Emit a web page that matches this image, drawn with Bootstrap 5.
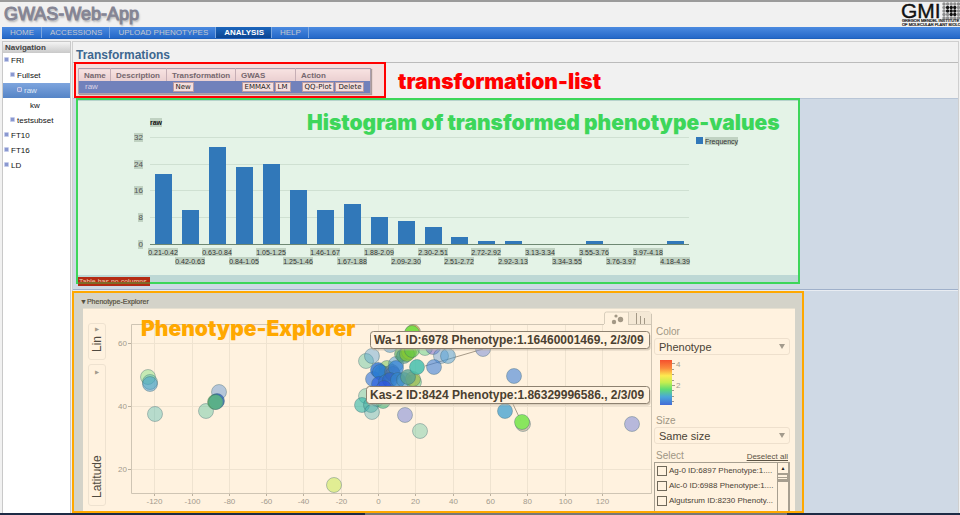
<!DOCTYPE html>
<html lang="en">
<head>
<meta charset="utf-8">
<meta name="viewport" content="width=device-width, initial-scale=1">
<title>GWAS-Web-App</title>
<link rel="stylesheet" href="https://cdn.jsdelivr.net/npm/bootstrap@5.3.0/dist/css/bootstrap.min.css">
<style>
body{font-family:"Liberation Sans",Arial,sans-serif;font-size:8px;line-height:10px;background:#f1f1f1;color:#333}
svg{display:block}
svg text{font-family:"Liberation Sans",Arial,sans-serif}
.top-strip{height:2px;background:#9b9b9b}
.brand{font-size:18px;line-height:25px;color:#858594;text-shadow:1px 2px 2px #aaa;-webkit-text-stroke:1px #858594}
.main-nav{background:linear-gradient(#4b8ae0,#2468c8);margin-left:2px;height:12px;border-bottom:1px solid #1f61bb}
.main-nav a{color:#c3c8d0;padding:0 7px 0 8px;line-height:12px;border-right:1px solid #7ba6df;font-size:8px;text-decoration:none}
.main-nav a.active{background:linear-gradient(#1c66bd,#0b4592);color:#fff;font-weight:bold}
.side{width:69px;margin:2px 0 0 2px;background:#fff;border:1px solid #c9c9c9;border-bottom:0}
.side h2{font-size:8px;line-height:11px;font-weight:bold;background:linear-gradient(#f4f4f4,#c9c9c9);padding-left:2px;color:#444}
.side a{display:block;line-height:15px;color:#111;text-decoration:none;font-size:8px}
.side a::before{content:"";display:inline-block;width:3px;height:3px;background:#8a98d0;border:1px solid #c3cbea;box-sizing:content-box;border-radius:1px;vertical-align:1px;margin-right:2px}
.side a.leaf::before{visibility:hidden}
.side a.active{background:linear-gradient(#7ea5de,#5584c6);color:#dfe8f6}
.side .lv0{padding-left:1px}.side .lv1{padding-left:7px}.side .lv2{padding-left:14px}.side .lv3{padding-left:20px}
.content{border:1px solid #cfcfcf;border-bottom:0;margin:2px 1px 0 1px}
.content h1{font-size:12px;line-height:14px;font-weight:bold;color:#3d678f;padding:6px 0 0 3px}
.list-row{border-top:1px solid #bbb}
.callout-red{width:312px;border:2px solid #f00;background:#f5dedd;margin:-1px 0 0 1px;padding:4px 2px 2px 2px}
.note{font-family:Inter,sans-serif;font-weight:900;line-height:24px}
.note-red{color:#f00;font-size:21px;margin-left:12px;padding-top:3px}
.tlist{border:1px solid #ab9fae;box-shadow:1px 1px 1px #a99;width:293px}
.tlist th{font-size:8px;line-height:11px;font-weight:bold;color:#75676e;background:linear-gradient(#f7e2e1,#eacfd0);padding:1px 0 0 5px;border-left:1px solid #c6aeb5}
.tlist td{background:#7181bb;color:#dcd3e5;line-height:12px;height:12px;padding:0 0 0 6px}
.tlist button{font-family:"DejaVu Sans",sans-serif;font-size:7px;line-height:8px;padding:0 2px;border:1px solid #b99ba1;background:#f5dedd;color:#222;height:10px;margin:1px 1px 1px 0;vertical-align:top}
.band{background:#cfd9e5;border-top:1px solid #b8c5d6;border-bottom:1px solid #9fb0ca}
.hist{border:2px solid #3dd65a;background:#e4f3e7;margin-left:3px;margin-right:158px;margin-bottom:5px;margin-top:-1px}
.hist-foot{height:7px;background:#bdd8d5}
.err{left:0;bottom:-4px;background:#b42a12;color:#e6cdb0;font-size:7px;line-height:10px;padding:0 1px;height:9px;overflow:hidden}
.err::after{content:"";position:absolute;left:0;right:0;bottom:2px;height:2px;background:#806a28}
.explorer-row{background:#cfd9e5;border-top:1px solid #e8ecf2;min-height:0}
.explorer{border:2px solid #ffa800;background:#d4d3c9;margin-left:-1px;margin-right:154px;padding:2px 7px 0 9px;min-height:0}
.explorer h2{font-size:7px;line-height:13px;margin:0 0 0 -3px;color:#55503f;-webkit-text-stroke:.2px #55503f}
.pane{background:#fff2df;border-top:1px solid #e6e0d0;overflow:hidden;min-height:0}
.axis{width:20px;margin-left:5px;padding-top:14px}
.axis button{writing-mode:vertical-rl;transform:rotate(180deg);width:18px;background:none;border:1px solid #eee2d0;border-radius:3px;font-size:12px;line-height:14px;color:#4f4a40;padding:7px 1px 4px}
.axis small{font-size:7px;color:#a39b8d;text-orientation:sideways}
.ctl{width:136px;margin-right:5px;padding-top:17px}
.ctl label,.ctl .cap{font-size:10px;line-height:12px;color:#a09684;padding-left:2px;display:block}
.pick{height:17px}
.pick select{appearance:none;width:100%;height:17px;border:1px solid #eee0cd;border-radius:3px;background:none;font-size:11px;line-height:14px;padding:0 4px;color:#4a4336}
.pick::after{content:"";position:absolute;right:5px;top:6px;border:3px solid transparent;border-top:5px solid #a39b8d;border-bottom:0}
.pick-head{padding:6px 2px 0 0}
.ctl a{font-size:8px;color:#5b5344}
.acc{border:1px solid #a79f90;border-bottom:0;height:60px;overflow:hidden}
.acc .line label{font-size:8px;line-height:15px;color:#4a4336;padding:0 0 0 2px;white-space:nowrap}
.acc .line{height:15px;padding-left:2px}
.acc input{appearance:none;width:10px;height:10px;border:1px solid #6f685a;margin:0}
.bar-v{width:12px;border:1px solid #a79f90;border-width:0 1px}
.bar-v button{border:0;border-bottom:1px solid #a79f90;background:none;font-size:5px;line-height:10px;height:11px;padding:0;width:100%;color:#222}
.bar-v i{display:block;height:8px;border:1px solid #a79f90;border-width:1px 1px 2px 0;background:linear-gradient(transparent 2px,#a79f90 2px 3px,transparent 3px 4px,#a79f90 4px 5px,transparent 5px)}
.bottom-strip{height:2px;background:linear-gradient(90deg,#1d2b45 38%,#777 38% 82%,#1d2b45 82%)}
</style>
<script src="https://cdn.jsdelivr.net/npm/bootstrap@5.3.0/dist/js/bootstrap.bundle.min.js"></script>
</head>
<body class="vh-100 d-flex flex-column overflow-hidden">
<div class="top-strip flex-shrink-0"></div>
<header class="d-flex justify-content-between flex-shrink-0">
  <div class="brand ps-1">GWAS-Web-App</div>
  <svg class="overflow-visible" width="59" height="25" viewBox="901 2 59 25" role="img" aria-label="GMI">
    <text x="901" y="18" font-size="21" fill="#111" stroke="#111" stroke-width=".4">GMI</text>
    <g id="logoDots"></g>
    <text x="902" y="22" font-size="4" fill="#111" stroke="#111" stroke-width=".2">GREGOR MENDEL INSTITUTE</text>
    <text x="902" y="26" font-size="4" fill="#111" stroke="#111" stroke-width=".2">OF MOLECULAR PLANT BIOLOGY</text>
  </svg>
</header>
<nav class="main-nav d-flex flex-shrink-0">
  <a href="#">HOME</a><a href="#">ACCESSIONS</a><a href="#">UPLOAD PHENOTYPES</a><a href="#" class="active">ANALYSIS</a><a href="#">HELP</a>
</nav>
<div class="d-flex flex-grow-1 overflow-hidden">
  <aside class="side flex-shrink-0">
    <h2 class="m-0">Navigation</h2>
    <a href="#" class="lv0">FRI</a>
    <a href="#" class="lv1">Fullset</a>
    <a href="#" class="lv2 active">raw</a>
    <a href="#" class="lv3 leaf">kw</a>
    <a href="#" class="lv1">testsubset</a>
    <a href="#" class="lv0">FT10</a>
    <a href="#" class="lv0">FT16</a>
    <a href="#" class="lv0">LD</a>
  </aside>
  <main class="content flex-grow-1 d-flex flex-column">
    <h1 class="m-0">Transformations</h1>
    <section class="list-row d-flex align-items-center">
      <div class="callout-red">
        <table class="tlist">
          <colgroup><col style="width:32px"><col style="width:56px"><col style="width:69px"><col style="width:60px"><col></colgroup>
          <thead><tr><th>Name</th><th>Description</th><th>Transformation</th><th>GWAS</th><th>Action</th></tr></thead>
          <tbody><tr><td>raw</td><td></td><td><button type="button">New</button></td><td><button type="button">EMMAX</button><button type="button">LM</button></td><td><button type="button">QQ-Plot</button><button type="button">Delete</button></td></tr></tbody>
        </table>
      </div>
      <div class="note note-red">transformation-list</div>
    </section>
    <section class="band">
      <div class="hist position-relative">
        <svg width="100%" viewBox="78 100 720 175" role="img" aria-label="Histogram of transformed phenotype values">
          <path d="M78 100.500H798" stroke="#b5d3cb"/>
          <g id="histGrid"></g><g id="histBars"></g>
          <path d="M150 244.500H689" stroke="#6e8873"/>
          <g id="histLabels"></g>
          <rect x="150" y="118" width="12" height="9" fill="#c0d2c2"/>
          <text x="150" y="125" font-size="7" font-weight="bold" fill="#111">raw</text>
          <rect x="696" y="137" width="7" height="7" fill="#3178b9"/>
          <rect x="705" y="137" width="33" height="8" fill="#c0d2c2"/>
          <text x="705" y="144" font-size="7" fill="#333">Frequency</text>
          <text class="note" x="307" y="130" font-size="21" fill="#3dd65a" style="font-family:Inter">Histogram of transformed phenotype-values</text>
        </svg>
        <div class="hist-foot"></div>
        <div class="err position-absolute">Table has no columns.</div>
      </div>
    </section>
    <section class="explorer-row flex-grow-1 d-flex flex-column">
      <div class="explorer flex-grow-1 d-flex flex-column">
        <h2>▼Phenotype-Explorer</h2>
        <div class="pane d-flex flex-grow-1">
          <div class="axis flex-shrink-0 d-flex flex-column">
            <button type="button" style="height:37px" class="mb-1 d-flex align-items-center flex-shrink-0">Lin&nbsp;<small>▼</small></button>
            <button type="button" style="height:142px" class="d-flex align-items-center justify-content-between flex-shrink-0">Latitude<small>▼</small></button>
          </div>
          <div class="flex-grow-1">
            <svg width="100%" viewBox="108 309 546 203" role="img" aria-label="Latitude and longitude scatter plot">
              <path d="M604.500 324V314q0-2 2-2H649q2 0 2 2V324M628.500 324V312" fill="none" stroke="#d8cebc"/>
              <rect x="629" y="312" width="22" height="12" fill="#f4e8d5"/>
              <g fill="#a39886"><circle cx="614" cy="322" r="2.200"/><circle cx="616" cy="316" r="1.600"/><circle cx="620.500" cy="319.500" r="2.700"/></g>
              <path d="M636.500 313V324M640.500 316V324M644.500 318V324" stroke="#a39886"/>
              <g id="plotGrid"></g>
              <path d="M604 324.500H131.500V493.500H651.500V314M628 324.500H651" fill="none" stroke="#cfc5b4"/>
              <path d="M425 366L483 349M512 402L521 421" stroke="#a79b89"/>
              <g id="dots"></g>
              <g font-size="12" font-weight="bold" fill="#4a4030">
                <rect x="371.500" y="333.500" width="279" height="17" rx="3" fill="#b9ad9b" opacity=".5"/>
                <rect x="370.500" y="331.500" width="279" height="17" rx="3" fill="#fff2df" stroke="#8d8170"/>
                <text x="374" y="344">Wa-1 ID:6978 Phenotype:1.16460001469., 2/3/09</text>
                <rect x="367.500" y="388.500" width="283" height="17" rx="3" fill="#b9ad9b" opacity=".5"/>
                <rect x="366.500" y="386.500" width="283" height="17" rx="3" fill="#fff2df" stroke="#8d8170"/>
                <text x="370" y="399">Kas-2 ID:8424 Phenotype:1.86329996586., 2/3/09</text>
              </g>
              <text class="note" x="141" y="336" font-size="21" fill="#ffa800" style="font-family:Inter">Phenotype-Explorer</text>
            </svg>
          </div>
          <div class="ctl flex-shrink-0">
            <label for="colorSel">Color</label>
            <div class="pick position-relative"><select id="colorSel"><option>Phenotype</option></select></div>
            <svg width="134" height="60" viewBox="655 355 134 60" aria-hidden="true">
              <defs><linearGradient id="heat" x2="0" y2="1"><stop offset="0" stop-color="#f5502e"/><stop offset=".18" stop-color="#fb8a3c"/><stop offset=".35" stop-color="#fdea50"/><stop offset=".5" stop-color="#c4ee50"/><stop offset=".65" stop-color="#5fdd72"/><stop offset=".82" stop-color="#4aa6da"/><stop offset="1" stop-color="#446bd6"/></linearGradient></defs>
              <rect x="661" y="360" width="12" height="45" fill="url(#heat)"/>
              <path d="M673 363.500h3M673 369.500h2M673 374.500h2M673 380.500h2M673 385.500h3M673 390.500h2M673 396.500h2M673 401.500h2" stroke="#a39b8d"/>
              <text x="677" y="367" font-size="8" fill="#a39b8d">4</text><text x="677" y="388" font-size="8" fill="#a39b8d">2</text>
            </svg>
            <label for="sizeSel">Size</label>
            <div class="pick position-relative"><select id="sizeSel"><option>Same size</option></select></div>
            <div class="pick-head d-flex justify-content-between align-items-end"><span class="cap">Select</span><a href="#">Deselect all</a></div>
            <div class="acc d-flex justify-content-between">
              <div class="overflow-hidden">
                <div class="line d-flex align-items-center"><input type="checkbox" id="a1"><label for="a1">Ag-0 ID:6897 Phenotype:1....</label></div>
                <div class="line d-flex align-items-center"><input type="checkbox" id="a2"><label for="a2">Alc-0 ID:6988 Phenotype:1....</label></div>
                <div class="line d-flex align-items-center"><input type="checkbox" id="a3"><label for="a3">Algutsrum ID:8230 Phenoty...</label></div>
                <div class="line d-flex align-items-center"><input type="checkbox" id="a4" aria-label="Next accession"></div>
              </div>
              <div class="bar-v flex-shrink-0"><button type="button" aria-label="Scroll up">▲</button><i></i></div>
            </div>
          </div>
        </div>
      </div>
    </section>
  </main>
</div>
<div class="bottom-strip flex-shrink-0"></div>
<script>
const put = (id, s) => document.getElementById(id).innerHTML = s;
let s = '';
for (let r = 0; r < 5; r++) for (let c = 0; c < 5; c++) {
  const dark = (r > 0 && r < 4 && c > 0 && c < 4 && !(r === 3 && c === 1));
  s += `<circle cx="${944 + c * 3.600}" cy="${4 + r * 3.500}" r="1.700" fill="${dark ? '#111' : '#8e8e8e'}"/>`;
}
put('logoDots', s);

// Histogram
const freq = [21,10,29,23,24,16,10,12,8,7,5,2,1,1,0,0,1,0,0,1];
const bins = ['0.21-0.42','0.42-0.63','0.63-0.84','0.84-1.05','1.05-1.25','1.25-1.46','1.46-1.67','1.67-1.88','1.88-2.09','2.09-2.30','2.30-2.51','2.51-2.72','2.72-2.92','2.92-3.13','3.13-3.34','3.34-3.55','3.55-3.76','3.76-3.97','3.97-4.18','4.18-4.39'];
let g = '', b = '', l = '';
[0,8,16,24,32].forEach(v => {
  const y = 244 - Math.round(v * 3.350), w = v > 8 ? 9 : 5;
  if (v) g += `<path d="M150 ${y + .5}H689" stroke="#cfe0d2"/>`;
  l += `<rect x="${143 - w}" y="${y - 4}" width="${w}" height="9" fill="#c0d2c2"/><text x="143" y="${y + 3}" font-size="8" text-anchor="end" fill="#555">${v}</text>`;
});
freq.forEach((v, i) => {
  const x = Math.round(155 + i * 26.950), h = Math.round(v * 3.350), cx = x + 8, y = i % 2 ? 264 : 255;
  if (v) b += `<rect x="${x}" y="${244 - h}" width="17" height="${h}" fill="#3178b9"/>`;
  l += `<rect x="${cx - 15}" y="${y - 7}" width="30" height="8" fill="#c0d2c2"/><text x="${cx}" y="${y}" font-size="7" text-anchor="middle" fill="#333">${bins[i]}</text>`;
});
put('histGrid', g); put('histBars', b); put('histLabels', l);

// Scatter plot
g = '';
for (let v = -120; v <= 120; v += 20) {
  const x = Math.round(378 + v * 1.865) + .5;
  g += `<path d="M${x} 325V493" stroke="#efe3d0"/><path d="M${x} 493v3" stroke="#bbb09e"/><text x="${x}" y="504" font-size="8" text-anchor="middle" fill="#a39b8d">${v}</text>`;
}
[[60,343],[40,406],[20,469]].forEach(([v, y]) => {
  g += `<path d="M132 ${y + .5}H651" stroke="#efe3d0"/><path d="M128 ${y + .5}h3" stroke="#bbb09e"/><text x="127" y="${y + 3}" font-size="8" text-anchor="end" fill="#a39b8d">${v}</text>`;
});
put('plotGrid', g);
const pts = [
  [148,377,'#8be28a',.5],[150,382,'#45bfae',.4],[150,384,'#3f95d0',.5],[155,414,'#4ab8ae',.4],[206,411,'#4abf98',.4],
  [219,392,'#4585d0',.4],[217,401,'#2f5fc8',.8],[215,402,'#5cbf4a',.8],[216,402,'#5aae98',.7],[334,485,'#cdea60',.6],
  [366,361,'#4abf98',.4],[372,356,'#4a9bd5',.4],[390,345,'#4a9bd5',.5],[366,396,'#4abf98',.4],[377,399,'#3f9fb8',.5],[362,405,'#2fb5a8',.6],[371,405,'#4aae9f',.5],[372,412,'#4aaeb5',.4],[383,401,'#3cb878',.6],
  [382,373,'#5cc06a',.6],[387,368,'#6cc050',.5],[386,374,'#8dc032',.6],[396,364,'#4a9bd5',.5],
  [373,379,'#2a70dd',.6],[378,370,'#2a70d5',.8],[380,372,'#2a80d5',.6],[379,384,'#2a60dd',.7],[386,382,'#3570d0',.7],[392,372,'#6670a8',.6],[393,374,'#4a70b0',.7],[396,368,'#2f80d5',.7],[390,380,'#2a65cf',.7],[398,380,'#3585cc',.8],[384,388,'#2a50dd',.6],[404,380,'#3d90c5',.6],
  [402,354,'#5fae65',.7],[404,356,'#4a9a88',.6],[409,352,'#9acb2d',.7],[407,354,'#7fc832',.7],[412,350,'#5fc84a',.6],
  [413,332,'#d69a22',.6],[412,333,'#73e045',.9],[414,382,'#6fd08a',.6],[413,379,'#a0b23c',.6],[408,377,'#5aa392',.8],[417,367,'#45bfae',.85],
  [425,348,'#5fd08a',.5],[433,347,'#7060cc',.5],[441,356,'#4a8fd5',.4],[448,356,'#4a9bd5',.5],[434,367,'#3f80d8',.6],[483,349,'#6f85d5',.5],
  [405,415,'#6f7dd8',.5],[420,431,'#4abf98',.35],[514,376,'#3f80d8',.6],[505,411,'#3f9fd0',.75],[523,424,'#8a8070',.4],[522,422,'#85e85a',.95],[632,424,'#6f7dd8',.5]
];
put('dots', pts.map(([x, y, c, o]) => `<circle cx="${x}" cy="${y}" r="7.500" fill="${c}" fill-opacity="${o}" stroke="#355f6a" stroke-opacity=".45" stroke-width=".8"/>`).join(''));
</script>
</body>
</html>
